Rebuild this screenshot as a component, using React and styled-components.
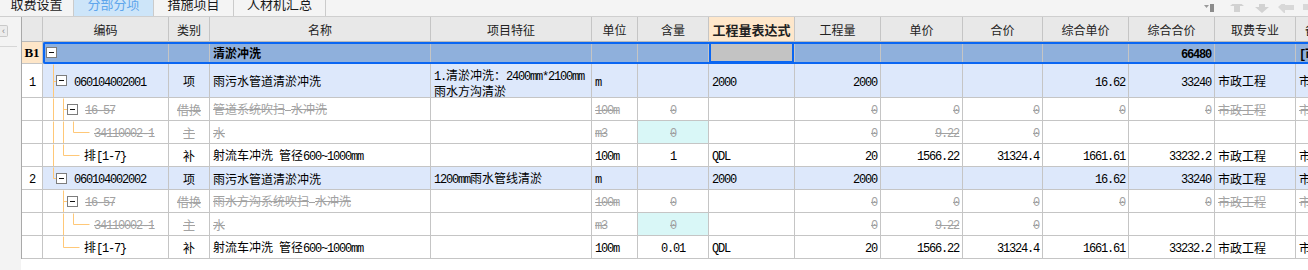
import React from 'react';
import styled, { createGlobalStyle } from 'styled-components';

const GlobalStyle = createGlobalStyle`
  html, body {
    margin: 0;
    padding: 0;
    background: #fff;
  }
  body {
    font-family: "Noto Sans CJK SC", sans-serif;
    font-size: 12px;
    color: #000;
  }
`;

const KEYS = ['no', 'code', 'type', 'name', 'feat', 'unit', 'qty', 'expr', 'amount', 'price', 'total', 'uprice', 'utotal', 'prof', 'last'];
const ALIGN = {
  no: 'center',
  type: 'center',
  qty: 'center',
  amount: 'right',
  price: 'right',
  total: 'right',
  uprice: 'right',
  utotal: 'right',
};

const Page = styled.div`
  width: 1308px;
  height: 270px;
  overflow: hidden;
  display: flex;
  flex-direction: column;
  background: #fff;
`;

const TabBar = styled.div`
  height: 17px;
  box-sizing: border-box;
  border-bottom: 1px solid #cfcfcf;
  background: #f4f4f4;
  display: flex;
  align-items: flex-end;
  overflow: hidden;
`;

const Tab = styled.div`
  width: ${p => p.$w}px;
  height: 24px;
  flex: none;
  box-sizing: border-box;
  border-right: 1px solid #cbcbcb;
  background: ${p => (p.$active ? '#cde5f9' : 'transparent')};
  color: ${p => (p.$active ? '#5fa6ec' : '#1a1a1a')};
  font-size: 13px;
  display: flex;
  align-items: center;
  justify-content: center;
  padding-bottom: 2px;
`;

const IconRow = styled.div`
  margin-left: auto;
  align-self: flex-start;
  margin-top: -1px;
`;

const Main = styled.div`
  flex: 1;
  display: flex;
`;

const Strip = styled.div`
  width: 21px;
  flex: none;
  background: #f3f3f3;
  display: flex;
  flex-direction: column;
  padding-top: 8px;
  box-sizing: border-box;
`;

const CollapseBtn = styled.div`
  width: 8px;
  height: 12px;
  box-sizing: border-box;
  border: 1px solid #c9c9c9;
  border-left: none;
  border-radius: 0 2px 2px 0;
  background: #ececec;
  color: #8a8a8a;
  font-size: 9px;
  line-height: 10px;
  text-align: center;
  font-family: "Liberation Sans", sans-serif;
`;

const StripLine = styled.div`
  margin-top: 9px;
  width: 17px;
  height: 1px;
  background: #d6d6d6;
`;

const Table = styled.div`
  align-self: flex-start;
  border-left: 1px solid #a9a9a9;
  flex: 1;
`;

const Row = styled.div`
  display: grid;
  grid-template-columns: 21px 126px 41px 221px 161px 46px 71px 86px 86px 82px 80px 86px 86px 81px 60px;
  height: ${p => p.$h}px;
  background: ${p => p.$bg || '#fff'};
  position: relative;
`;

const Asc = styled.span`
  font-family: "Liberation Mono", monospace;
  letter-spacing: -1.2px;
  font-weight: inherit;
`;

const Cjk = styled.span`
  font-family: "Noto Sans CJK SC", sans-serif;
`;

const Cell = styled.div`
  box-sizing: border-box;
  border-right: 1px solid #c5c5c5;
  border-bottom: 1px solid ${p => (p.$head ? '#b9b9b9' : '#c5c5c5')};
  display: flex;
  align-items: ${p => (p.$top ? 'flex-start' : 'center')};
  justify-content: ${p => (p.$align === 'right' ? 'flex-end' : p.$align === 'center' ? 'center' : 'flex-start')};
  padding: ${p => (p.$top ? '4px 3px 0' : '0 3px')};
  overflow: hidden;
  white-space: nowrap;
  background: ${p => p.$bg || 'transparent'};
  color: ${p => (p.$muted ? '#a2a2a2' : p.$head ? '#222' : '#000')};
  font-weight: ${p => (p.$bold ? 700 : 400)};
  font-size: ${p => (p.$big ? 13 : 12)}px;
  box-shadow: ${p => (p.$current ? 'inset 0 0 0 2px #0a66f2' : 'none')};
  position: relative;

  ${Asc}, ${Cjk} {
    text-decoration: ${p => (p.$muted ? 'line-through' : 'none')};
  }
`;

const Lines = styled.div`
  line-height: 14px;
  white-space: nowrap;
`;

const SerifBold = styled.span`
  font-family: "Liberation Serif", serif;
  font-weight: 700;
  font-size: 13px;
`;

const Frame = styled.div`
  position: absolute;
  top: 0;
  bottom: 0;
  left: 21px;
  right: -20px;
  border: 2px solid #0a66f2;
  border-radius: 2px;
  pointer-events: none;
`;

const CodeCell = styled(Cell)`
  padding-left: ${p => p.$pad}px;
`;

const GuideSvg = styled.svg`
  position: absolute;
  top: 0;
  left: 0;
`;

const Box = styled.span`
  width: 11px;
  height: 11px;
  flex: none;
  box-sizing: border-box;
  border: 1px solid #7d7d7d;
  background: #fff;
  margin-right: 7px;
  position: relative;
  z-index: 1;

  &::after {
    content: '';
    position: absolute;
    left: 2px;
    top: 4px;
    width: 5px;
    height: 1px;
    background: #111;
  }
`;

const Txt = ({ text }) => {
  if (typeof text !== 'string') return text;
  return (
    <span>
      {text
        .split(/([\x20-\x7e]+)/)
        .filter(Boolean)
        .map((p, i) => (/^[\x20-\x7e]+$/.test(p) ? <Asc key={i}>{p}</Asc> : <Cjk key={i}>{p}</Cjk>))}
    </span>
  );
};

const Guides = ({ lines, h }) => (
  <GuideSvg width="60" height={h}>
    {lines.map(([x1, y1, x2, y2], i) => (
      <line key={i} x1={x1 + 0.5} y1={y1 + 0.5} x2={x2 + 0.5} y2={y2 + 0.5} stroke="#ffc878" strokeWidth="1" />
    ))}
  </GuideSvg>
);

const TopIcons = () => (
  <IconRow>
    <svg width="104" height="9" viewBox="0 0 104 9">
      <path d="M0 1h5l-2.5 3z" fill="#9a9a9a" />
      <rect x="6" y="-2" width="4" height="10" fill="#8c8c8c" />
      <path d="M33 -4l7 6h-4v6h-6v-6h-4z" fill="#d2d2d2" />
      <path d="M55 -3h6v6h4l-7 6l-7 -6h4z" fill="#d2d2d2" />
      <path d="M74 3l7 -6v4h9v5h-9v4z" fill="#d8d8d8" />
      <rect x="99" y="-2" width="5" height="8" fill="#d8d8d8" />
    </svg>
  </IconRow>
);

const HEAD = ['', '编码', '类别', '名称', '项目特征', '单位', '含量', '工程量表达式', '工程量', '单价', '合价', '综合单价', '综合合价', '取费专业', '备注'];

const HeaderRow = () => (
  <Row $h={25} $bg="#e8e8e8">
    {HEAD.map((t, i) =>
      i === 7 ? (
        <Cell key={i} $head $align="center" $bg="#fee7cb" $bold $big>
          {t}
        </Cell>
      ) : (
        <Cell key={i} $head $align={i === 14 ? 'left' : 'center'} style={i === 14 ? { paddingLeft: 9 } : undefined}>
          {t}
        </Cell>
      )
    )}
  </Row>
);

const SectionRow = () => (
  <Row $h={22} $bg="#8fb0dc">
    <Cell $align="center" $bg="#fee6c8">
      <SerifBold>B1</SerifBold>
    </Cell>
    <CodeCell $pad={3}>
      <Box />
    </CodeCell>
    <Cell />
    <Cell $bold>清淤冲洗</Cell>
    <Cell />
    <Cell />
    <Cell />
    <Cell $bg="#c3c3c3" $current />
    <Cell />
    <Cell />
    <Cell />
    <Cell />
    <Cell $align="right" $bold>
      <Txt text="66480" />
    </Cell>
    <Cell />
    <Cell $bold>
      <Txt text="[市" />
    </Cell>
    <Frame />
  </Row>
);

const DataRow = ({ r }) => (
  <Row $h={r.h} $bg={r.bg}>
    {KEYS.map(k => {
      if (k === 'code') {
        return (
          <CodeCell key={k} $pad={r.pad} $muted={r.muted}>
            <Guides lines={r.lines} h={r.h} />
            {r.box && <Box />}
            <Txt text={r.code} />
          </CodeCell>
        );
      }
      if (k === 'no') {
        return (
          <Cell key={k} $align="center" $bg="#fff">
            <Txt text={r.no || ''} />
          </Cell>
        );
      }
      if (k === 'feat' && Array.isArray(r.feat)) {
        return (
          <Cell key={k} $top>
            <Lines>
              {r.feat.map((l, i) => (
                <div key={i}>
                  <Txt text={l} />
                </div>
              ))}
            </Lines>
          </Cell>
        );
      }
      const v = r[k] || '';
      return (
        <Cell
          key={k}
          $align={ALIGN[k]}
          $muted={r.muted && v !== ''}
          $bg={k === 'qty' && r.cyan ? '#d9f7f7' : undefined}
        >
          <Txt text={v} />
        </Cell>
      );
    })}
  </Row>
);

const group = (no, code, feat, childName, qty, last) => {
  const tail = last ? [] : [[10, 0, 10, 23]];
  const h = feat.length > 1 ? 34 : 23;
  const mid = Math.floor(h / 2);
  return [
    {
      h,
      bg: '#dde8fb',
      no,
      code,
      box: true,
      pad: 13,
      lines: [[10, 0, 10, last ? mid : h], [10, mid, 13, mid]],
      type: '项',
      name: '雨污水管道清淤冲洗',
      feat: feat.length > 1 ? feat : feat[0],
      unit: 'm',
      expr: '2000',
      amount: '2000',
      uprice: '16.62',
      utotal: '33240',
      prof: '市政工程',
      last: '市',
    },
    {
      h: 23,
      muted: true,
      code: '16-57',
      box: true,
      pad: 24,
      lines: [...tail, [20, 0, 20, 23], [20, 11, 24, 11]],
      type: '借换',
      name: childName,
      unit: '100m',
      qty: '0',
      amount: '0',
      price: '0',
      total: '0',
      uprice: '0',
      utotal: '0',
      prof: '市政工程',
      last: '市',
    },
    {
      h: 23,
      muted: true,
      cyan: true,
      code: '34110002-1',
      pad: 51,
      lines: [...tail, [20, 0, 20, 23], [30, 0, 30, 11], [30, 11, 46, 11]],
      type: '主',
      name: '水',
      unit: 'm3',
      qty: '0',
      amount: '0',
      price: '9.22',
      total: '0',
    },
    {
      h: 23,
      code: '排[1-7}',
      pad: 41,
      lines: [...tail, [20, 0, 20, 11], [20, 11, 36, 11]],
      type: '补',
      name: '射流车冲洗 管径600~1000mm',
      unit: '100m',
      qty,
      expr: 'QDL',
      amount: '20',
      price: '1566.22',
      total: '31324.4',
      uprice: '1661.61',
      utotal: '33232.2',
      prof: '市政工程',
      last: '市',
    },
  ];
};

const ROWS = [
  ...group('1', '060104002001', ['1.清淤冲洗：2400mm*2100mm', '雨水方沟清淤'], '管道系统吹扫 水冲洗', '1', false),
  ...group('2', '060104002002', ['1200mm雨水管线清淤'], '雨水方沟系统吹扫 水冲洗', '0.01', true),
];

const TABS = [
  { label: '取费设置', w: 74 },
  { label: '分部分项', w: 80, active: true },
  { label: '措施项目', w: 80 },
  { label: '人材机汇总', w: 92 },
];

export default function App() {
  return (
    <Page>
      <GlobalStyle />
      <TabBar>
        {TABS.map(t => (
          <Tab key={t.label} $w={t.w} $active={t.active}>
            {t.label}
          </Tab>
        ))}
        <TopIcons />
      </TabBar>
      <Main>
        <Strip>
          <CollapseBtn>‹</CollapseBtn>
          <StripLine />
        </Strip>
        <Table>
          <HeaderRow />
          <SectionRow />
          {ROWS.map((r, i) => (
            <DataRow key={i} r={r} />
          ))}
        </Table>
      </Main>
    </Page>
  );
}
